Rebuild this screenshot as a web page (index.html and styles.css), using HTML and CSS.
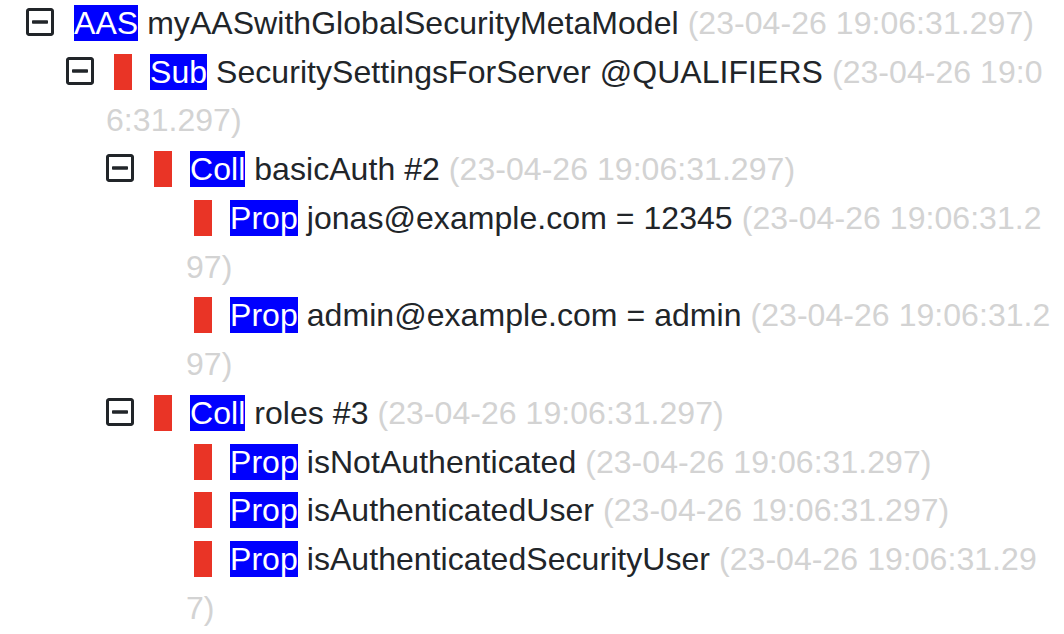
FILE: index.html
```html
<!DOCTYPE html>
<html lang="en">
<head>
<meta charset="utf-8">
<title>AAS tree</title>
<link rel="stylesheet" href="styles.css">
</head>
<body>
<ul class="tree">
  <li class="node">
    <span class="toggle"><svg viewBox="0 0 448 512" aria-hidden="true"><path d="M108 284c-6.6 0-12-5.4-12-12v-32c0-6.6 5.4-12 12-12h232c6.6 0 12 5.4 12 12v32c0 6.6-5.4 12-12 12H108zM448 80v352c0 26.5-21.5 48-48 48H48c-26.5 0-48-21.5-48-48V80c0-26.5 21.5-48 48-48h352c26.5 0 48 21.5 48 48zm-48 346V86c0-3.3-2.7-6-6-6H54c-3.3 0-6 2.7-6 6v340c0 3.3 2.7 6 6 6h340c3.3 0 6-2.7 6-6z"/></svg></span><span class="type first">AAS</span> myAASwithGlobalSecurityMetaModel <span class="ts">(23-04-26 19:06:31.297)</span>
    <ul class="children">
      <li class="node">
        <span class="toggle"><svg viewBox="0 0 448 512" aria-hidden="true"><path d="M108 284c-6.6 0-12-5.4-12-12v-32c0-6.6 5.4-12 12-12h232c6.6 0 12 5.4 12 12v32c0 6.6-5.4 12-12 12H108zM448 80v352c0 26.5-21.5 48-48 48H48c-26.5 0-48-21.5-48-48V80c0-26.5 21.5-48 48-48h352c26.5 0 48 21.5 48 48zm-48 346V86c0-3.3-2.7-6-6-6H54c-3.3 0-6 2.7-6 6v340c0 3.3 2.7 6 6 6h340c3.3 0 6-2.7 6-6z"/></svg></span><span class="bar"></span><span class="type">Sub</span> SecuritySettingsForServer @QUALIFIERS <span class="ts">(23-04-26 19:06:31.297)</span>
        <ul class="children">
          <li class="node">
            <span class="toggle"><svg viewBox="0 0 448 512" aria-hidden="true"><path d="M108 284c-6.6 0-12-5.4-12-12v-32c0-6.6 5.4-12 12-12h232c6.6 0 12 5.4 12 12v32c0 6.6-5.4 12-12 12H108zM448 80v352c0 26.5-21.5 48-48 48H48c-26.5 0-48-21.5-48-48V80c0-26.5 21.5-48 48-48h352c26.5 0 48 21.5 48 48zm-48 346V86c0-3.3-2.7-6-6-6H54c-3.3 0-6 2.7-6 6v340c0 3.3 2.7 6 6 6h340c3.3 0 6-2.7 6-6z"/></svg></span><span class="bar"></span><span class="type">Coll</span> basicAuth #2 <span class="ts">(23-04-26 19:06:31.297)</span>
            <ul class="children">
              <li class="node"><span class="bar"></span><span class="type">Prop</span> jonas@example.com = 12345 <span class="ts">(23-04-26 19:06:31.297)</span></li>
              <li class="node"><span class="bar"></span><span class="type">Prop</span> admin@example.com = admin <span class="ts">(23-04-26 19:06:31.297)</span></li>
            </ul>
          </li>
          <li class="node">
            <span class="toggle"><svg viewBox="0 0 448 512" aria-hidden="true"><path d="M108 284c-6.6 0-12-5.4-12-12v-32c0-6.6 5.4-12 12-12h232c6.6 0 12 5.4 12 12v32c0 6.6-5.4 12-12 12H108zM448 80v352c0 26.5-21.5 48-48 48H48c-26.5 0-48-21.5-48-48V80c0-26.5 21.5-48 48-48h352c26.5 0 48 21.5 48 48zm-48 346V86c0-3.3-2.7-6-6-6H54c-3.3 0-6 2.7-6 6v340c0 3.3 2.7 6 6 6h340c3.3 0 6-2.7 6-6z"/></svg></span><span class="bar"></span><span class="type">Coll</span> roles #3 <span class="ts">(23-04-26 19:06:31.297)</span>
            <ul class="children">
              <li class="node"><span class="bar"></span><span class="type">Prop</span> isNotAuthenticated <span class="ts">(23-04-26 19:06:31.297)</span></li>
              <li class="node"><span class="bar"></span><span class="type">Prop</span> isAuthenticatedUser <span class="ts">(23-04-26 19:06:31.297)</span></li>
              <li class="node"><span class="bar"></span><span class="type">Prop</span> isAuthenticatedSecurityUser <span class="ts">(23-04-26 19:06:31.297)</span></li>
            </ul>
          </li>
        </ul>
      </li>
    </ul>
  </li>
</ul>
</body>
</html>
```
FILE: styles.css
```css
html, body {
  margin: 0;
  padding: 0;
  background: #ffffff;
}

body {
  font-family: "Liberation Sans", Arial, Helvetica, sans-serif;
  font-size: 32px;
  line-height: 48.73px;
  letter-spacing: 0.05px;
  color: #212529;
}

.tree {
  list-style: none;
  margin: -1px 0 0 0;
  padding: 0 10px 0 66px;
}

.children {
  list-style: none;
  margin: 0;
  padding: 0 0 0 40px;
}

.node {
  word-break: break-all;
}

.toggle {
  display: inline-block;
  width: 28px;
  height: 32px;
  margin-left: -40px;
  margin-right: 12px;
  vertical-align: -4px;
  color: #212529;
}

.toggle svg {
  display: block;
  width: 28px;
  height: 32px;
  fill: currentColor;
}

.bar {
  display: inline-block;
  width: 18px;
  height: 36px;
  margin-left: 8px;
  margin-right: 18px;
  vertical-align: text-bottom;
  background: #e93426;
}

.type {
  background: #0000ff;
  color: #ffffff;
}

.type.first {
  margin-left: 8px;
}

.ts {
  color: #d3d3d3;
}
```
